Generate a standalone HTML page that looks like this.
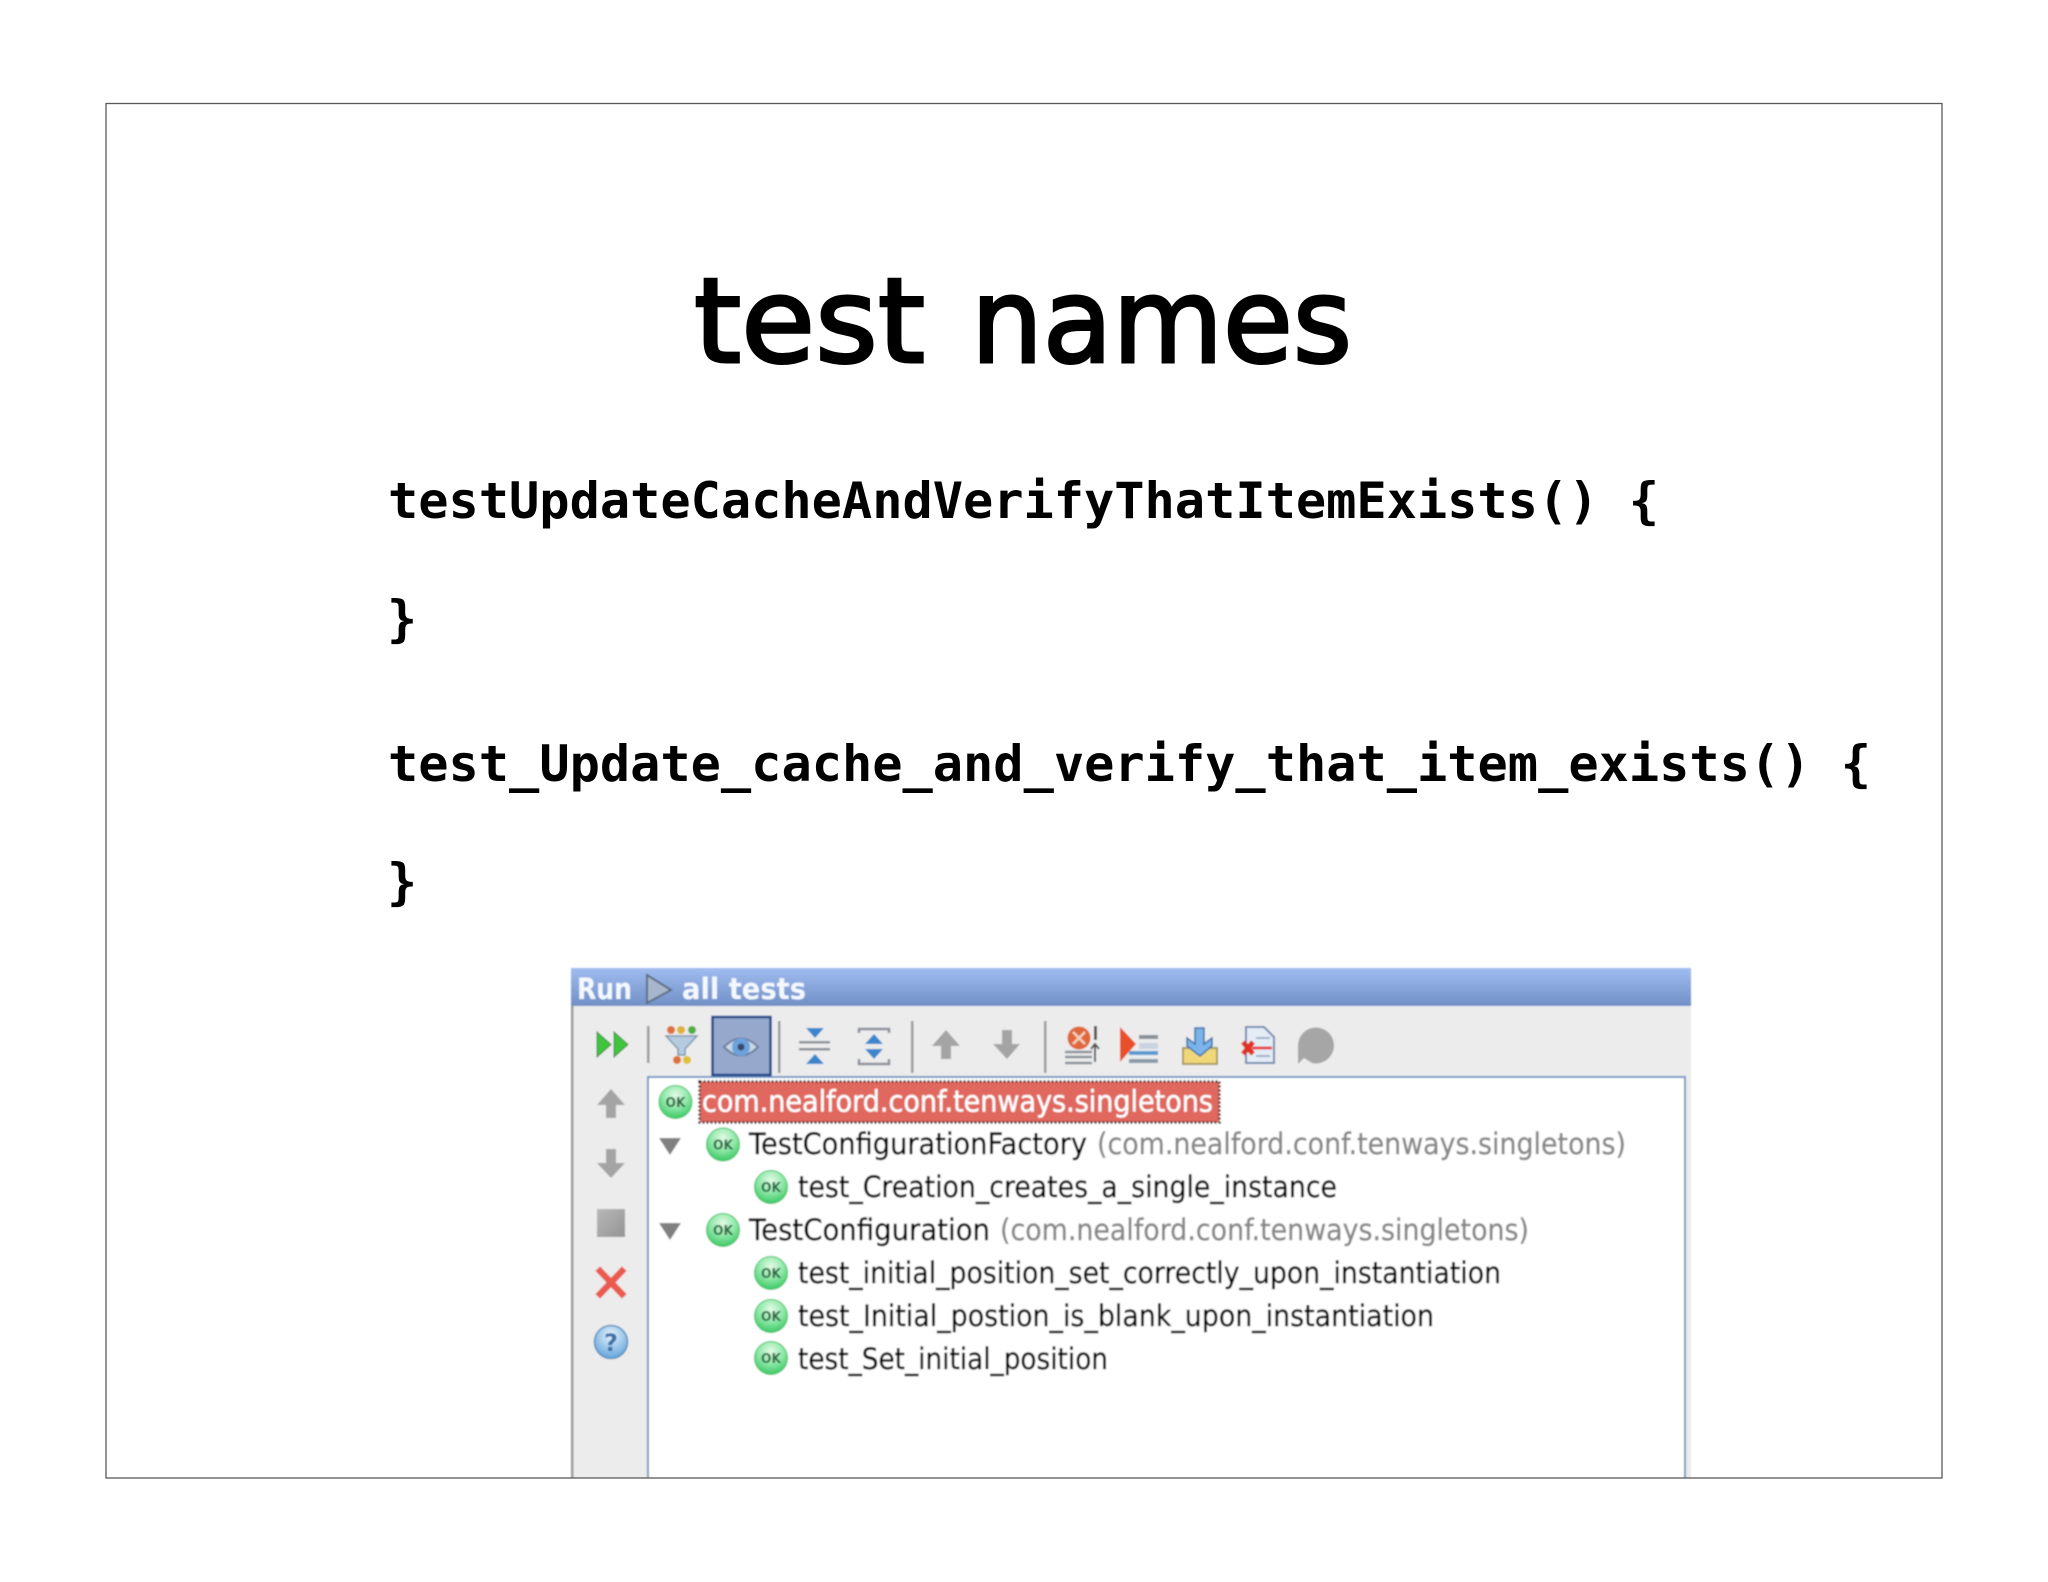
<!DOCTYPE html>
<html><head><meta charset="utf-8"><title>test names</title>
<style>html,body{margin:0;padding:0;background:#fff}svg{display:block}</style></head>
<body>
<svg xmlns="http://www.w3.org/2000/svg" width="2048" height="1582" viewBox="0 0 2048 1582">
<defs>
<linearGradient id="tb" x1="0" y1="0" x2="0" y2="1"><stop offset="0" stop-color="#a0bcf0"/><stop offset="1" stop-color="#6f8fc6"/></linearGradient>
<radialGradient id="ok" cx=".5" cy=".3" r=".75"><stop offset="0" stop-color="#e4fbe8"/><stop offset=".5" stop-color="#8fe8a8"/><stop offset="1" stop-color="#2fc45a"/></radialGradient>
<radialGradient id="help" cx=".5" cy=".3" r=".75"><stop offset="0" stop-color="#e6f2fb"/><stop offset="1" stop-color="#5a9fd8"/></radialGradient>
<linearGradient id="gr" x1="0" y1="0" x2="1" y2="1"><stop offset="0" stop-color="#b8b8b8"/><stop offset="1" stop-color="#949494"/></linearGradient>
<filter id="b" x="-2%" y="-2%" width="104%" height="104%"><feGaussianBlur stdDeviation="0.7"/></filter>
<clipPath id="c"><rect x="560" y="950" width="1140" height="528"/></clipPath>
<g id="okb"><circle r="16.5" fill="url(#ok)" stroke="#3cc064" stroke-width="1"/><text x="0" y="5" font-family="'DejaVu Sans',sans-serif" font-size="13" font-weight="bold" fill="#2f6a45" text-anchor="middle" textLength="20" lengthAdjust="spacingAndGlyphs">OK</text></g>
</defs>
<rect width="2048" height="1582" fill="#fff"/>

<g font-family="'DejaVu Sans',sans-serif" font-size="118" fill="#000" stroke="#000" stroke-width="3">
<text x="694" y="362" textLength="231" lengthAdjust="spacingAndGlyphs">test</text>
<text x="971" y="362" textLength="381" lengthAdjust="spacingAndGlyphs">names</text>
</g>
<g font-family="'DejaVu Sans Mono','Liberation Mono',monospace" font-weight="bold" font-size="50" fill="#000">
<text x="388" y="518" textLength="1271" lengthAdjust="spacingAndGlyphs">testUpdateCacheAndVerifyThatItemExists() {</text>
<text x="387" y="636">}</text>
<text x="388" y="781" textLength="1483" lengthAdjust="spacingAndGlyphs">test_Update_cache_and_verify_that_item_exists() {</text>
<text x="387" y="899">}</text>
</g>

<g clip-path="url(#c)"><g filter="url(#b)">
<rect x="571" y="968" width="1120" height="520" fill="#ececec"/>
<rect x="571" y="968" width="1120" height="38" fill="url(#tb)"/>
<rect x="571" y="1006" width="2.5" height="480" fill="#9a9a9a"/>
<rect x="648" y="1077" width="1037" height="420" fill="#fff" stroke="#6f96c4" stroke-width="2"/>

<g font-family="'DejaVu Sans',sans-serif" font-weight="bold" font-size="29" fill="#f4f8ff">
<text x="577" y="999" textLength="55" lengthAdjust="spacingAndGlyphs">Run</text>
<text x="682" y="999" textLength="124" lengthAdjust="spacingAndGlyphs">all tests</text>
</g>
<path d="M647 975L671 990L647 1003Z" fill="#a8b6cc" stroke="#5d6c84" stroke-width="2"/>

<!-- toolbar -->
<path d="M597 1032L611 1044.5L597 1057ZM614 1032L628 1044.5L614 1057Z" fill="#3fc43a" stroke="#2f8a3a" stroke-width="1"/>
<g fill="#9a9a9a"><rect x="647" y="1026" width="2.5" height="37"/><rect x="778" y="1021" width="2.5" height="52"/><rect x="911" y="1021" width="2.5" height="52"/><rect x="1044" y="1021" width="2.5" height="52"/></g>
<circle cx="671" cy="1030" r="4" fill="#e0703a"/><circle cx="681" cy="1030" r="4" fill="#e0b030"/><circle cx="692" cy="1030" r="4" fill="#50b040"/>
<path d="M666 1036H697L685 1049V1055H678V1049Z" fill="#b6cbe0" stroke="#7f97ad" stroke-width="1.5"/>
<circle cx="677" cy="1060" r="4" fill="#e0703a"/><circle cx="687" cy="1060" r="4" fill="#e0c030"/>

<rect x="712.5" y="1017" width="58" height="58" fill="#96a8cc" stroke="#1f4488" stroke-width="2.5"/>
<path d="M724 1047Q741 1030 758 1047Q741 1064 724 1047Z" fill="#c8d8e8" stroke="#6d7f9c" stroke-width="2"/>
<circle cx="741" cy="1047" r="9" fill="#6ba2dc"/><circle cx="741" cy="1047" r="3.5" fill="#3a4a68"/>

<path d="M806 1028H824L815 1038Z" fill="#3b86cc"/>
<rect x="799" y="1041" width="31" height="2.5" fill="#8a8f98"/><rect x="799" y="1048" width="31" height="2.5" fill="#8a8f98"/>
<path d="M806 1064H824L815 1054Z" fill="#3b86cc"/>
<path d="M859 1033V1029H889V1033M859 1059V1064H889V1059" fill="none" stroke="#8a8f98" stroke-width="2.5"/>
<path d="M865 1044L874 1034L883 1044ZM865 1049L874 1059L883 1049Z" fill="#3b86cc"/>

<g fill="#a4a4a4">
<path d="M946 1030L960 1046H951V1059H941V1046H932Z"/>
<path d="M1002 1030H1012V1044H1020L1007 1059L993 1044H1002Z"/>
<path d="M611 1089L625 1105H616V1118H606V1105H597Z"/>
<path d="M606 1149H616V1163H625L611 1178L597 1163H606Z"/>
</g>
<rect x="597" y="1209" width="28" height="28" fill="url(#gr)"/>
<path d="M600 1271L622 1294M622 1271L600 1294" stroke="#ea5a50" stroke-width="6.5" fill="none" stroke-linecap="square"/>
<circle cx="611" cy="1342" r="16.5" fill="url(#help)" stroke="#5a90c0" stroke-width="1.5"/>
<text x="611" y="1351" font-family="'DejaVu Sans',sans-serif" font-weight="bold" font-size="24" fill="#3a70a8" text-anchor="middle">?</text>

<circle cx="1079" cy="1038" r="11.5" fill="#e0683a"/><path d="M1073 1032L1085 1044M1085 1032L1073 1044" stroke="#f2d0c0" stroke-width="2.5"/>
<rect x="1094" y="1026" width="3" height="14" fill="#555"/>
<path d="M1065 1052H1092M1065 1057H1092M1065 1063H1092" stroke="#8a909a" stroke-width="2.5"/>
<path d="M1095 1062V1045M1091 1049L1095 1044L1099 1049" stroke="#555" stroke-width="2" fill="none"/>

<path d="M1120 1027L1136 1044L1120 1062Z" fill="#e8502a"/>
<rect x="1139" y="1035" width="19" height="4" fill="#8a9098"/><rect x="1139" y="1043" width="19" height="6" fill="#c8d4e0"/><rect x="1129" y="1051" width="29" height="4" fill="#5a9ad0"/><rect x="1129" y="1059" width="29" height="4" fill="#8a9aa8"/>

<rect x="1183" y="1048" width="34" height="16" fill="#f0d878" stroke="#a89868" stroke-width="2"/>
<path d="M1195 1028H1204V1044L1212 1038V1046L1200 1056L1187 1046V1038L1195 1044Z" fill="#7ab4ea" stroke="#3f6fa8" stroke-width="1.5"/>

<path d="M1246 1027H1264L1274 1037V1063H1246Z" fill="#e4ecf6" stroke="#6f88b0" stroke-width="2"/>
<path d="M1252 1048H1272" stroke="#e84040" stroke-width="3"/>
<path d="M1256 1038H1270M1256 1056H1270" stroke="#9fb0c8" stroke-width="2"/>
<path d="M1243 1042L1253 1054M1253 1042L1243 1054" stroke="#e03020" stroke-width="5"/>

<path d="M1298 1064V1046A18 18 0 1 1 1312 1063L1304 1058Z" fill="#a6a6a6"/>

<!-- tree -->
<rect x="699.5" y="1081.5" width="520" height="41" fill="#e0685f" stroke="#2a1818" stroke-width="2.5" stroke-dasharray="2 2"/>
<use href="#okb" x="675.5" y="1102"/>
<use href="#okb" x="723" y="1144.5"/>
<use href="#okb" x="771" y="1187"/>
<use href="#okb" x="723" y="1230"/>
<use href="#okb" x="771" y="1273"/>
<use href="#okb" x="771" y="1316"/>
<use href="#okb" x="771" y="1358"/>
<path d="M659 1138H681L670 1155ZM659 1223H681L670 1240Z" fill="#808080"/>

<g font-family="'DejaVu Sans',sans-serif" font-size="29.5" fill="#000" stroke="#000" stroke-width=".4">
<text x="702" y="1111.5" fill="#fff" stroke="#fff" textLength="511" lengthAdjust="spacingAndGlyphs">com.nealford.conf.tenways.singletons</text>
<text x="749" y="1154" textLength="338" lengthAdjust="spacingAndGlyphs">TestConfigurationFactory</text>
<text x="1097" y="1154" fill="#888" stroke="#888" textLength="529" lengthAdjust="spacingAndGlyphs">(com.nealford.conf.tenways.singletons)</text>
<text x="798" y="1197" textLength="539" lengthAdjust="spacingAndGlyphs">test_Creation_creates_a_single_instance</text>
<text x="749" y="1240" textLength="241" lengthAdjust="spacingAndGlyphs">TestConfiguration</text>
<text x="1000" y="1240" fill="#888" stroke="#888" textLength="529" lengthAdjust="spacingAndGlyphs">(com.nealford.conf.tenways.singletons)</text>
<text x="798" y="1283" textLength="703" lengthAdjust="spacingAndGlyphs">test_initial_position_set_correctly_upon_instantiation</text>
<text x="798" y="1326" textLength="636" lengthAdjust="spacingAndGlyphs">test_Initial_postion_is_blank_upon_instantiation</text>
<text x="798" y="1369" textLength="310" lengthAdjust="spacingAndGlyphs">test_Set_initial_position</text>
</g>
</g></g>

<rect x="106" y="103.5" width="1836" height="1374.5" fill="none" stroke="#5a5a5a" stroke-width="1.3"/>
</svg>
</body></html>
